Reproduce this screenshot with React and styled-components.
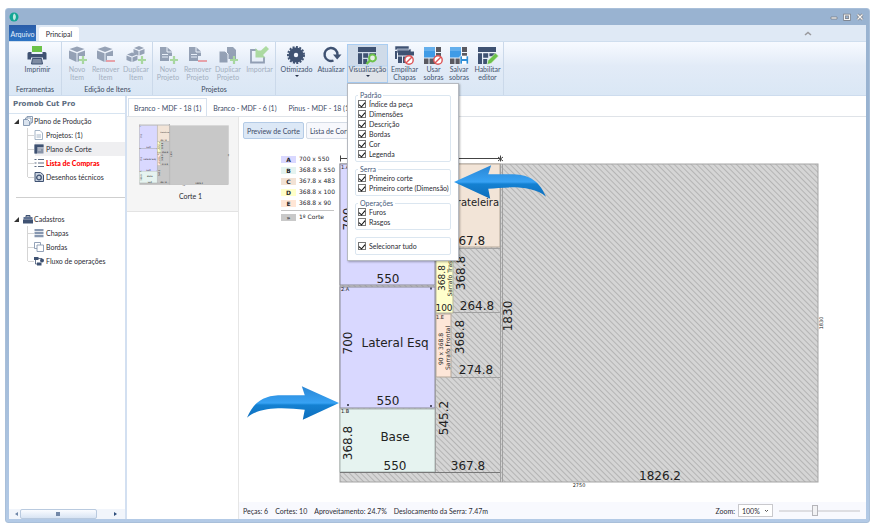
import { useId, useState } from 'react';
import styled, { createGlobalStyle, css } from 'styled-components';

const ribbonGroups = [
  {
    title: 'Ferramentas',
    items: [{ icon: 'printer', label: 'Imprimir', width: 47 }],
  },
  {
    title: 'Edição de Itens',
    items: [
      { icon: 'boxAdd', label: 'Novo Item', width: 28, disabled: true },
      { icon: 'boxRemove', label: 'Remover Item', width: 29, disabled: true },
      { icon: 'boxCopy', label: 'Duplicar Item', width: 32, disabled: true },
    ],
  },
  {
    title: 'Projetos',
    items: [
      { icon: 'docAdd', label: 'Novo Projeto', width: 30, disabled: true },
      { icon: 'docRemove', label: 'Remover Projeto', width: 29, disabled: true },
      { icon: 'docCopy', label: 'Duplicar Projeto', width: 32, disabled: true },
      { icon: 'importIcon', label: 'Importar', width: 31, disabled: true },
    ],
  },
  {
    title: '',
    items: [
      { icon: 'saw', label: 'Otimizado', width: 37, arrow: true },
      { icon: 'refresh', label: 'Atualizar', width: 32 },
      { icon: 'layoutSearch', label: 'Visualização', width: 41, arrow: true, menu: true },
      { icon: 'stack', label: 'Empilhar Chapas', width: 33 },
      { icon: 'leftoverUse', label: 'Usar sobras', width: 25 },
      { icon: 'leftoverSave', label: 'Salvar sobras', width: 26 },
      { icon: 'layoutEdit', label: 'Habilitar editor', width: 31 },
    ],
  },
];

const menuGroups = [
  { title: 'Padrão', options: ['Índice da peça', 'Dimensões', 'Descrição', 'Bordas', 'Cor', 'Legenda'] },
  { title: 'Serra', options: ['Primeiro corte', 'Primeiro corte (Dimensão)'] },
  { title: 'Operações', options: ['Furos', 'Rasgos'] },
];

const legend = [
  { id: 'A', size: '700 x 550', color: '#d9d8ff' },
  { id: 'B', size: '368.8 x 550', color: '#e4f3f0' },
  { id: 'C', size: '367.8 x 483', color: '#f2e2d4' },
  { id: 'D', size: '368.8 x 100', color: '#ffffc8' },
  { id: 'E', size: '368.8 x 90', color: '#ffe6d6' },
];

const production = [
  { icon: 'pages', label: 'Projetos: (1)' },
  { icon: 'plan', label: 'Plano de Corte', selected: true },
  { icon: 'list', label: 'Lista de Compras', alert: true },
  { icon: 'technical', label: 'Desenhos técnicos' },
];

const records = [
  { icon: 'sheets', label: 'Chapas' },
  { icon: 'edges', label: 'Bordas' },
  { icon: 'flow', label: 'Fluxo de operações' },
];

const NAVY = '#3f5272';
const GREEN = '#6cc24a';

const Plus = () => <path d="M17 10v8M13 14h8" stroke={GREEN} strokeWidth="2.2" />;
const Minus = () => <path d="M12 15h9" stroke="#e8474c" strokeWidth="1.8" />;
const Forbidden = () => (
  <g fill="#fff" stroke="#dd5456" strokeWidth="1.4">
    <circle cx="16" cy="14" r="4.2" />
    <path d="M13 17l6-6" />
  </g>
);
const Box = () => (
  <g fill={NAVY}>
    <path d="M11 0.500l7.500 2.600-7.500 2.800-7.500-2.800z" />
    <path d="M3 4.500l7.500 2.800v8.600L3 12.500z" />
    <path d="M19 4.500l-7.500 2.800v8.600l1.500-0.600V10h6z" />
  </g>
);
const Doc = () => (
  <g>
    <path d="M3 1h7l5 4.600V10h-3v5H3z" fill={NAVY} />
    <path d="M10 1v5h5M5 8.500h6M5 11h6" stroke="#e6edf8" fill="none" />
  </g>
);
const Panels = () => (
  <path d="M2 1h18v5H2zM2 7.200h4v10.800H2zM7.200 7.200h5v4.600h-5zM7.200 13h4v5h-4zM13.400 7.200H20v3h-6.600z" fill={NAVY} />
);
const Leftover = () => (
  <g>
    <path d="M2 1h11v10.500H2z" fill="#3f9be6" />
    <path d="M2 1h11v4H2z" fill="#7dbcf0" opacity="0.6" />
    <path d="M14 1h5v5h-5zM14 7h5v6h-5zM2 12.600h4.500V18H2zM7.500 12.600H13V18H7.500z" fill="#5a5a62" />
  </g>
);

const icons = {
  printer: (
    <g>
      <path d="M6 0h10v6H6z" fill={GREEN} />
      <path d="M3 6h2.500v2h11V6H19a1.500 1.500 0 0 1 1.500 1.500v6H17V11.500H5v2H1.500v-6A1.500 1.500 0 0 1 3 6z" fill={NAVY} />
      <path d="M6.500 12.500h9l1 5.500h-11z" fill="#7d8ba2" stroke={NAVY} />
    </g>
  ),
  boxAdd: <><Box /><Plus /></>,
  boxRemove: <><Box /><Minus /></>,
  boxCopy: (
    <g>
      <path d="M14 0l5 2-5 2-5-2zM8.500 3l5 2v4.500l-5-2zM19.500 3l-5 2v4.500l5-2z" fill={NAVY} />
      <path d="M7 6.500l5 2-5 2-5-2zM1.500 9.500l5 2V16l-5-2zM12.500 9.500l-5 2V16l5-2z" fill={NAVY} />
      <Plus />
    </g>
  ),
  docAdd: <><Doc /><Plus /></>,
  docRemove: <><Doc /><Minus /></>,
  docCopy: (
    <g>
      <path d="M10 1h6l3 3v9h-9z" fill={NAVY} />
      <path d="M2 5h6l3 3v9H2z" fill={NAVY} stroke="#eef3fb" />
      <Plus />
    </g>
  ),
  importIcon: (
    <g>
      <path d="M9 4H3v12.500h13V11" stroke={NAVY} strokeWidth="1.800" fill="none" />
      <path d="M18 0l3 3-6 6 2.500 2.500H7.500V2L10 4.500l3 0z" fill={GREEN} />
    </g>
  ),
  saw: (
    <g>
      <circle cx="11" cy="9" r="7.500" fill={NAVY} />
      <circle cx="11" cy="9" r="8" fill="none" stroke={NAVY} strokeWidth="2" strokeDasharray="2 1.400" />
      <circle cx="11" cy="9" r="2.200" fill="#f2f6fd" />
    </g>
  ),
  refresh: (
    <g>
      <path d="M13.500 14.500A6.500 6.500 0 1 1 17.500 9" stroke={NAVY} strokeWidth="2.400" fill="none" />
      <path d="M13 8.500h8.500L17.200 13.500z" fill={NAVY} />
    </g>
  ),
  layoutSearch: (
    <g>
      <Panels />
      <circle cx="16.500" cy="12" r="3.400" fill="#e6efe6" stroke={GREEN} strokeWidth="2" />
      <path d="M14 14.500L10.500 18" stroke={GREEN} strokeWidth="2.400" />
    </g>
  ),
  stack: (
    <g>
      <path d="M2 0h14v4H2zM4 3h14v4H4z" fill={NAVY} stroke="#dfe8f5" strokeWidth="0.600" />
      <path d="M5 5.500h16v4H5zM5 10.500h4V17H5zM10 10.500h4V17h-4zM2 5h2v8H2z" fill={NAVY} />
      <Forbidden />
    </g>
  ),
  leftoverUse: <><Leftover /><Forbidden /></>,
  leftoverSave: (
    <g>
      <Leftover />
      <path d="M12 10h8.500v8H12z" fill="#2f8fd8" stroke="#fff" strokeWidth="0.600" />
      <path d="M14 10h4.500v3H14zM14 15h4.500v3H14z" fill="#fff" />
    </g>
  ),
  layoutEdit: (
    <g>
      <Panels />
      <path d="M11 18.500l1-4 7.500-7.500 3 3-7.500 7.500z" fill={GREEN} stroke="#eef5ee" strokeWidth="0.600" />
    </g>
  ),
};

const treeIcons = {
  production: (
    <g fill="#fff" stroke="#7f93ad" strokeWidth="0.900">
      <path d="M4 0.500h5.500v6H4z" />
      <path d="M2.500 2H8v6H2.500z" />
      <path d="M0.500 3.500h4l2 2v4h-6z" fill="#dbe4ef" />
    </g>
  ),
  pages: (
    <g stroke="#9aabbf" strokeWidth="0.900" fill="#fff">
      <path d="M1 0.500h5l2.500 2.500v6.500H1z" />
      <path d="M2.500 5h4.500M2.500 7h4.500" />
    </g>
  ),
  plan: (
    <g>
      <path d="M0.500 0.500h9v9h-9z" fill="#8793a8" />
      <path d="M0.500 0.500h9V3h-9zM0.500 3H3v6.500H0.500z" fill={NAVY} />
      <path d="M4 4h5M4 6h3" stroke="#e3e7ee" strokeWidth="0.700" />
    </g>
  ),
  list: (
    <path d="M0.500 1.500h2M0.500 5h2M0.500 8.500h2M4 1.500h6M4 5h6M4 8.500h6" stroke="#5c6b82" strokeWidth="1.100" />
  ),
  technical: (
    <g>
      <path d="M1 0.500h5.500L9.500 3v6.500H1z" fill="#c9d2df" stroke={NAVY} />
      <circle cx="5" cy="5.500" r="2.300" fill="none" stroke={NAVY} strokeWidth="1.300" />
    </g>
  ),
  cabinet: (
    <g>
      <path d="M3 1.500h4V3H3z" fill="none" stroke={NAVY} />
      <path d="M0.500 3h9v2.500h-9z" fill="#5f7192" />
      <path d="M0 5.500h10v4H0z" fill={NAVY} />
    </g>
  ),
  sheets: <path d="M0.500 1h9v2.200h-9zM0.500 4h9v2.200h-9zM0.500 7h9v2.200h-9z" fill="#8797b0" />,
  edges: (
    <g fill="#fff" stroke="#8797b0" strokeWidth="0.900">
      <path d="M0.500 0.500h6v6h-6z" />
      <path d="M3 3h6.500v6.500H3z" />
    </g>
  ),
  flow: (
    <g fill={NAVY}>
      <path d="M0 1h4.500v3H0zM3 6.500h4.500v3H3z" />
      <circle cx="8" cy="4.500" r="2" />
      <path d="M4 2.500h4M1.500 4v4H3" stroke={NAVY} fill="none" strokeWidth="0.800" />
    </g>
  ),
};

function Board({ flat }) {
  const hatch = useId();
  const waste = flat ? '#c8c8c8' : `url(#${hatch})`;

  return (
    <Drawing viewBox="337 155 489 335">
      <defs>
        <pattern id={hatch} width="4" height="4" patternUnits="userSpaceOnUse" patternTransform="rotate(-45)">
          <rect width="4" height="4" fill="#d5d5d5" />
          <rect width="1" height="4" fill="#b4b4b4" />
        </pattern>
      </defs>

      <rect x="340" y="164" width="478" height="318" fill={waste} stroke="#a5a5a5" />

      <g stroke="#444" fill="none">
        <path d="M340 158.500H500" />
        <path d="M340.500 155.500v6M500.500 155.500v6M498 157l5 4M498 161l5-4" />
      </g>

      <g stroke="#8a8a96">
        <rect x="340" y="164" width="95" height="121" fill="#d9d8ff" />
        <rect x="340" y="287" width="95" height="121" fill="#d9d8ff" />
        <rect x="340" y="409" width="95" height="63" fill="#e6f3f0" stroke="#a9b5b2" />
        <rect x="436" y="164" width="64" height="83" fill="#f2e4d7" stroke="#b5a899" />
        <rect x="436" y="249" width="17" height="64" fill="#ffffcc" stroke="#b5b59a" />
        <rect x="436" y="314" width="15" height="63" fill="#fde6d8" stroke="#b5a899" />
      </g>

      <g stroke="#a0a0a0" fill="none">
        <path d="M435.500 164V472M500.500 164V482M502.500 164V482" />
        <path d="M453 312.500H500M451 377.500H500M436 248.500H500" />
        <path d="M340 472.500H500" stroke="#777" />
      </g>

      <BoardText>
        <text x="388" y="283">550</text>
        <text x="395" y="347">Lateral Esq</text>
        <text x="388" y="405">550</text>
        <text x="395" y="441">Base</text>
        <text x="395" y="470">550</text>
        <text x="468" y="470">367.8</text>
        <text x="468" y="245">367.8</text>
        <text x="477" y="310">264.8</text>
        <text x="476" y="374">274.8</text>
        <text x="660" y="480">1826.2</text>
        <text transform="translate(352 219) rotate(-90)">700</text>
        <text transform="translate(352 343) rotate(-90)">700</text>
        <text transform="translate(352 443) rotate(-90)">368.8</text>
        <text transform="translate(465 273) rotate(-90)">368.8</text>
        <text transform="translate(464 337) rotate(-90)">368.8</text>
        <text transform="translate(448 418) rotate(-90)">545.2</text>
        <text transform="translate(512 316) rotate(-90)">1830</text>
      </BoardText>
      <BoardText $size={10}>
        <text x="475" y="206">Prateleira</text>
      </BoardText>
      <BoardText $size={9}>
        <text x="444" y="311">100</text>
        <text transform="translate(445 278) rotate(-90)">368.8</text>
      </BoardText>
      <BoardText $size={6}>
        <text transform="translate(443 349) rotate(-90)">90 x 368.8</text>
        <text transform="translate(450 348) rotate(-90)">Sarrafo Frontal</text>
        <text transform="translate(452 273) rotate(-90)">Sarrafo Traseiro</text>
      </BoardText>
      <BoardText $size={5}>
        <text x="345" y="169">1.A</text>
        <text x="345" y="291">2.A</text>
        <text x="345" y="413">1.B</text>
        <text x="440" y="319">1.E</text>
        <text x="579" y="487">2750</text>
        <text transform="translate(823 323) rotate(-90)">1830</text>
      </BoardText>
      <path d="M430 288.500h2M347 405h2M430 406h2" stroke="#55556a" strokeWidth="2" />
    </Drawing>
  );
}

function PointerArrow({ id, flip }) {
  return (
    <svg viewBox="0 0 94 34" width="92" height="34">
      <defs>
        <linearGradient id={id} x1="0" y1="0" x2="0" y2="1">
          <stop offset="0" stopColor="#2a86d4" />
          <stop offset="0.500" stopColor="#37a2f4" />
          <stop offset="0.560" stopColor="#1481d2" />
          <stop offset="1" stopColor="#0d6dbb" />
        </linearGradient>
      </defs>
      <g transform={flip ? 'translate(94 0) scale(-1 1)' : undefined}>
        <path d="M0 32C8 13 20 9 36 9H59L56 0 94 17 57 34 59 24C40 22 14 20 0 32Z" fill={`url(#${id})`} />
      </g>
    </svg>
  );
}

function Option({ label }) {
  return (
    <OptionLabel>
      <input type="checkbox" defaultChecked />
      {label}
    </OptionLabel>
  );
}

function ViewMenu() {
  return (
    <Menu>
      {menuGroups.map(group => (
        <OptionGroup key={group.title}>
          <legend>{group.title}</legend>
          {group.options.map(option => <Option key={option} label={option} />)}
        </OptionGroup>
      ))}
      <SelectAll>
        <Option label="Selecionar tudo" />
      </SelectAll>
    </Menu>
  );
}

function RibbonItem({ item, open, onToggle }) {
  return (
    <RibbonSlot $width={item.width}>
      <RibbonButton type="button" disabled={item.disabled} $open={open} onClick={onToggle}>
        <svg viewBox="0 0 23 19" width="23" height="19">{icons[item.icon]}</svg>
        <span>{item.label}</span>
        {item.arrow && <Caret />}
      </RibbonButton>
      {open && <ViewMenu />}
    </RibbonSlot>
  );
}

function Tree({ icon, title, items }) {
  return (
    <section>
      <TreeRoot>
        <Expander />
        <svg viewBox="0 0 10 10" width="10" height="10">{treeIcons[icon]}</svg>
        {title}
      </TreeRoot>
      <TreeList>
        {items.map(item => (
          <TreeItem key={item.label} $selected={item.selected} $alert={item.alert}>
            <svg viewBox="0 0 10 10" width="10" height="10">{treeIcons[item.icon]}</svg>
            <span>{item.label}</span>
          </TreeItem>
        ))}
      </TreeList>
    </section>
  );
}

export default function App() {
  const [menuOpen, setMenuOpen] = useState(true);

  return (
    <>
      <GlobalStyle />
      <Window>
        <TitleBar>
          <svg viewBox="0 0 10 10" width="10" height="10">
            <circle cx="5" cy="5" r="4.500" fill="#12a594" />
            <path d="M5 1.500c2.500 1 2.500 5.500 0 7C3.500 6.500 3.500 3.500 5 1.500z" fill="#bfe9e0" />
          </svg>
          <WindowButtons>
            <button type="button" aria-label="Minimizar">
              <svg viewBox="0 0 8 8" width="8" height="8"><path d="M1 4h6v2H1z" fill="#f4f4f4" stroke="#77797f" strokeWidth="0.700" /></svg>
            </button>
            <button type="button" aria-label="Maximizar">
              <svg viewBox="0 0 8 8" width="8" height="8"><path d="M1.500 2h5v4.500h-5z" fill="none" stroke="#77797f" strokeWidth="2.400" /><path d="M1.500 2h5v4.500h-5z" fill="none" stroke="#f4f4f4" strokeWidth="1.200" /></svg>
            </button>
            <button type="button" aria-label="Fechar">
              <svg viewBox="0 0 8 8" width="8" height="8"><path d="M1.500 1.500l5 5M6.500 1.500l-5 5" stroke="#77797f" strokeWidth="2.600" /><path d="M1.500 1.500l5 5M6.500 1.500l-5 5" stroke="#f4f4f4" strokeWidth="1.400" /></svg>
            </button>
          </WindowButtons>
        </TitleBar>

        <Frame>
          <RibbonTabs>
            <FileTab type="button">Arquivo</FileTab>
            <RibbonTab type="button">Principal</RibbonTab>
            <Collapse type="button" aria-label="Recolher">
              <svg viewBox="0 0 8 5" width="8" height="5"><path d="M1 4l3-2.500L7 4" fill="none" stroke="#9a9a9e" strokeWidth="1.600" /></svg>
            </Collapse>
          </RibbonTabs>

          <Ribbon>
            {ribbonGroups.map(group => (
              <RibbonGroup key={group.title}>
                <RibbonItems>
                  {group.items.map(item => (
                    <RibbonItem
                      key={item.label}
                      item={item}
                      open={item.menu && menuOpen}
                      onToggle={item.menu ? () => setMenuOpen(!menuOpen) : undefined}
                    />
                  ))}
                </RibbonItems>
                <GroupTitle>{group.title}</GroupTitle>
              </RibbonGroup>
            ))}
          </Ribbon>

          <Body>
            <Sidebar>
              <SidebarTitle>Promob Cut Pro</SidebarTitle>
              <Trees>
                <Tree icon="production" title="Plano de Produção" items={production} />
                <TreeSeparator />
                <Tree icon="cabinet" title="Cadastros" items={records} />
              </Trees>
              <ScrollBar>
                <ScrollArrow />
                <ScrollThumb />
                <ScrollArrow $right />
              </ScrollBar>
            </Sidebar>

            <Content>
              <MaterialTabs>
                <MaterialTab type="button" $active>Branco - MDF - 18 (1)</MaterialTab>
                <MaterialTab type="button">Branco - MDF - 6 (1)</MaterialTab>
                <MaterialTab type="button">Pinus - MDF - 18 (1)</MaterialTab>
              </MaterialTabs>

              <Workspace>
                <Cuts>
                  <Cut>
                    <Board flat />
                    <figcaption>Corte 1</figcaption>
                  </Cut>
                </Cuts>

                <Preview>
                  <PreviewTabs>
                    <PreviewTab type="button" $active>Preview de Corte</PreviewTab>
                    <PreviewTab type="button">Lista de Corte</PreviewTab>
                  </PreviewTabs>

                  <Plan>
                    <Legend>
                      {legend.map(part => (
                        <li key={part.id}>
                          <Swatch $color={part.color}>{part.id}</Swatch>
                          {part.size}
                        </li>
                      ))}
                      <FirstCut>
                        <Swatch $color="#c9c9c9">»</Swatch>
                        1º Corte
                      </FirstCut>
                    </Legend>
                    <Board />
                  </Plan>

                  <StatusBar>
                    <span>Peças: 6</span>
                    <span>Cortes: 10</span>
                    <span>Aproveitamento: 24.7%</span>
                    <span>Deslocamento da Serra: 7.47m</span>
                    <ZoomBox>
                      <label htmlFor="zoom">Zoom:</label>
                      <ZoomSelect id="zoom" defaultValue="100%">
                        <option>50%</option>
                        <option>100%</option>
                        <option>200%</option>
                      </ZoomSelect>
                      <ZoomSlider type="range" aria-label="Zoom" min="0" max="100" defaultValue="44" />
                    </ZoomBox>
                  </StatusBar>
                </Preview>
              </Workspace>
            </Content>
          </Body>
        </Frame>

        <ArrowRight><PointerArrow id="arrow-right" /></ArrowRight>
        <ArrowLeft><PointerArrow id="arrow-left" flip /></ArrowLeft>
      </Window>
    </>
  );
}

const GlobalStyle = createGlobalStyle`
  * {
    box-sizing: border-box;
  }

  body {
    margin: 0;
    background: #fff;
    color: #2b2b33;
    font-family: Lato, 'Open Sans', sans-serif;
    font-size: 7px;
    line-height: 8px;
  }

  button, input, select {
    font: inherit;
    color: inherit;
  }

  ul {
    margin: 0;
    padding: 0;
    list-style: none;
  }

  svg {
    display: block;
    flex-shrink: 0;
  }
`

const Window = styled.div`
  position: relative;
  display: flex;
  flex-direction: column;
  min-height: calc(100vh - 13px);
  margin: 8px 6px 5px 5px;
  padding: 0 3px 3px;
  border: 1px solid #a9bfd9;
  border-radius: 3px;
  background: linear-gradient(#99b3d1 50%, #b3cae6);
`

const TitleBar = styled.header`
  display: flex;
  align-items: center;
  justify-content: space-between;
  height: 16px;
  padding-right: 2px;
`

const WindowButtons = styled.div`
  display: flex;
  gap: 5px;

  button {
    padding: 0;
    border: none;
    background: none;
  }
`

const Frame = styled.div`
  flex: 1;
  display: flex;
  flex-direction: column;
  background: #fff;
`

const RibbonTabs = styled.nav`
  display: flex;
  height: 17px;
  background: #dfe9f5;
  border-bottom: 1px solid #cfdeee;
`

const FileTab = styled.button`
  width: 27px;
  padding: 1px 0 0;
  border: none;
  background: linear-gradient(#2a5ca8, #2d74c4);
  color: #e6f0fc;
`

const RibbonTab = styled.button`
  width: 40px;
  margin: 2px 0 0 3px;
  padding: 0;
  border: none;
  border-radius: 2px 2px 0 0;
  background: #fff;
`

const Collapse = styled.button`
  align-self: center;
  margin: 0 54px 0 auto;
  padding: 0;
  border: none;
  background: none;
`

const Ribbon = styled.div`
  display: flex;
  height: 54px;
  background: linear-gradient(#f7faff, #e2ebf7 45%, #dae7f5);
  border-bottom: 1px solid #cddcee;
`

const RibbonItems = styled.div`
  flex: 1;
  display: flex;
`

const RibbonGroup = styled.section`
  display: flex;
  flex-direction: column;
  padding: 2px 0;
  border-right: 1px solid #cbd9ea;

  &:first-child ${RibbonItems} {
    padding-left: 5px;
  }

  &:nth-child(2) {
    padding-left: 1px;
  }

  &:last-child {
    padding-left: 2px;
  }
`

const RibbonSlot = styled.div`
  position: relative;
  width: ${({ $width }) => $width}px;
`

const RibbonButton = styled.button`
  display: flex;
  flex-direction: column;
  align-items: center;
  width: 100%;
  height: 39px;
  padding: 1px 0 0;
  border: 1px solid transparent;
  background: none;
  color: #44546e;

  ${({ $open }) => $open && css`
    border-color: #a9cdf2;
    background: linear-gradient(#cfdbe9 55%, #b3d3f3 56%, #dfe3e9 60%);
  `}

  &:disabled svg {
    opacity: 0.5;
  }

  &:disabled {
    color: #a3afc0;
  }
`

const Caret = styled.i`
  margin-top: 2px;
  border: 2px solid transparent;
  border-top-color: #26324a;
`

const GroupTitle = styled.h2`
  margin: 0;
  height: 8px;
  font-size: 7px;
  font-weight: 400;
  text-align: center;
  color: #3c4a60;
`

const Menu = styled.div`
  position: absolute;
  z-index: 2;
  top: 39px;
  left: 0;
  display: flex;
  flex-direction: column;
  gap: 3px;
  width: 112px;
  padding: 7px 7px 5px;
  border: 1px solid #b5b9c0;
  background: #fff;
  box-shadow: 1px 1px 2px rgba(0, 0, 0, 0.3);
`

const OptionGroup = styled.fieldset`
  min-width: 0;
  margin: 0;
  padding: 0 0 2px 2px;
  border: 1px solid #dbe6f0;
  border-radius: 2px;

  legend {
    padding: 0 2px;
    color: #46597a;
  }
`

const SelectAll = styled.div`
  margin-top: 4px;
  padding: 3px 0 3px 2px;
  border: 1px solid #dbe6f0;
  border-radius: 2px;
`

const OptionLabel = styled.label`
  display: flex;
  align-items: center;
  gap: 3px;
  height: 10px;
  white-space: nowrap;

  input {
    appearance: none;
    display: grid;
    flex-shrink: 0;
    place-content: center;
    width: 8px;
    height: 8px;
    margin: 0;
    border: 1px solid #777;
    background: #fff;
  }

  input:checked::after {
    content: '';
    width: 3px;
    height: 5px;
    border: solid #111;
    border-width: 0 1px 1px 0;
    transform: rotate(40deg);
  }
`

const Body = styled.div`
  flex: 1;
  display: flex;
`

const Sidebar = styled.aside`
  display: flex;
  flex-direction: column;
  width: 118px;
  border-right: 2px solid #d3e0f1;
`

const SidebarTitle = styled.h1`
  margin: 0;
  padding: 4px 4px 5px;
  border-bottom: 1px solid #d7e4f1;
  font-family: 'DejaVu Sans', sans-serif;
  font-size: 7px;
  font-weight: 700;
  line-height: 8px;
  color: #5b6b80;
`

const Trees = styled.div`
  flex: 1;
`

const TreeRoot = styled.div`
  display: flex;
  align-items: center;
  gap: 1px;
  height: 14px;
  padding-left: 5px;

  svg {
    margin-left: 3px;
  }
`

const Expander = styled.i`
  border: solid transparent;
  border-width: 0 0 5px 5px;
  border-bottom-color: #333;
`

const TreeList = styled.ul`
  padding-left: 18px;
`

const TreeItem = styled.li`
  display: flex;
  align-items: center;
  height: 14px;
  border-left: 1px solid #d5d5d5;

  &::before {
    content: '';
    width: 6px;
    border-top: 1px solid #d5d5d5;
  }

  &:last-child {
    border-image: linear-gradient(#d5d5d5 50%, transparent 50%) 1;
  }

  span {
    flex: 1;
    padding-left: 2px;
    line-height: 14px;
    white-space: nowrap;
  }

  ${({ $selected }) => $selected && css`
    background: linear-gradient(90deg, transparent 7px, #efeff1 7px);
  `}

  ${({ $alert }) => $alert && css`
    color: #f00;
    font-weight: 900;
  `}
`

const TreeSeparator = styled.hr`
  margin: 13px 0 14px 7px;
  border: none;
  border-top: 1px solid #cfcfcf;
`

const ScrollBar = styled.div`
  display: flex;
  align-items: center;
  justify-content: space-between;
  height: 10px;
  padding: 0 5px 0 3px;
  background: #f1f5fb;
`

const ScrollArrow = styled.i`
  border: 2px solid transparent;
  border-width: 2px 3px;
  border-right-color: ${({ $right }) => ($right ? 'transparent' : '#6f87a8')};
  border-left-color: ${({ $right }) => ($right ? '#2f4f7d' : 'transparent')};
`

const ScrollThumb = styled.div`
  display: grid;
  place-content: center;
  width: 77px;
  height: 10px;
  margin-right: 16px;
  border: 1px solid #b9cadf;
  border-radius: 2px;
  background: linear-gradient(#fafcff, #d8e4f3);

  &::after {
    content: '';
    width: 4px;
    height: 4px;
    background: #7388a8;
  }
`

const Content = styled.main`
  flex: 1;
  display: flex;
  flex-direction: column;
  min-width: 0;
`

const MaterialTabs = styled.nav`
  display: flex;
  height: 21px;
  padding: 2px 0 0 1px;
  border-bottom: 1px solid #dfe3e8;
`

const MaterialTab = styled.button`
  height: 18px;
  padding: 0 5px;
  border: 1px solid transparent;
  border-bottom: none;
  background: none;
  color: #3c4a66;

  ${({ $active }) => $active && css`
    border-color: #d6e1ee;
  `}
`

const Workspace = styled.div`
  flex: 1;
  display: flex;
`

const Cuts = styled.div`
  width: 112px;
  border-right: 1px solid #e6e6e6;
`

const Cut = styled.figure`
  display: flex;
  flex-direction: column;
  gap: 6px;
  margin: 0;
  padding: 7px 8px 11px 12px;
  border-bottom: 1px solid #e3e3e3;
  background: #f5f5f5;
  text-align: center;

  figcaption {
    padding-left: 12px;
  }
`

const Preview = styled.section`
  flex: 1;
  display: flex;
  flex-direction: column;
  min-width: 0;
`

const PreviewTabs = styled.div`
  display: flex;
  gap: 2px;
  padding: 5px 4px;
`

const PreviewTab = styled.button`
  height: 17px;
  padding: 0 3px;
  border: 1px solid #d5dce6;
  border-radius: 2px;
  background: #f7f8fc;
  color: #3c4a66;

  ${({ $active }) => $active && css`
    border-color: #b4cbe6;
    background: #dce8f6;
  `}
`

const Plan = styled.div`
  flex: 1;
  display: flex;
  align-items: flex-start;
  gap: 3px;
  padding: 11px 40px 8px 42px;
`

const Legend = styled.ul`
  width: 53px;
  font-family: 'DejaVu Sans', sans-serif;
  font-size: 6px;
  color: #26262c;
  white-space: nowrap;

  li {
    display: flex;
    align-items: center;
    gap: 3px;
    padding-bottom: 3px;
    line-height: 8px;
  }
`

const Swatch = styled.b`
  flex-shrink: 0;
  width: 15px;
  text-align: center;
  line-height: 7px;
  background: ${({ $color }) => $color};
`

const FirstCut = styled.li`
  padding-top: 2px;
  border-top: 1px solid #c4c4c4;
`

const Drawing = styled.svg`
  flex: 1;
  min-width: 0;
  width: 100%;
`

const BoardText = styled.g`
  fill: #222;
  font-family: 'DejaVu Sans', sans-serif;
  font-size: ${({ $size = 12 }) => $size}px;
  text-anchor: middle;
`

const StatusBar = styled.footer`
  display: flex;
  align-items: center;
  gap: 7px;
  height: 17px;
  padding: 0 6px 0 4px;
  background: #f8f9fe;
  white-space: nowrap;
`

const ZoomBox = styled.div`
  display: flex;
  align-items: center;
  gap: 3px;
  margin-left: auto;
`

const ZoomSelect = styled.select`
  appearance: none;
  width: 35px;
  height: 13px;
  margin-right: 3px;
  padding: 0 3px;
  border: 1px solid #c9c9cd;
  background: #fff url("data:image/svg+xml,%3Csvg xmlns='http://www.w3.org/2000/svg' width='5' height='4'%3E%3Cpath d='M1 1l1.500 1.500L4 1' fill='none' stroke='%23555'/%3E%3C/svg%3E") no-repeat right 3px center;
`

const ZoomSlider = styled.input`
  appearance: none;
  width: 81px;
  height: 12px;
  margin: 0;
  background: none;

  &::-webkit-slider-runnable-track {
    height: 2px;
    background: #dedee2;
  }

  &::-webkit-slider-thumb {
    appearance: none;
    width: 6px;
    height: 11px;
    margin-top: -5px;
    border: 1px solid #b5b5ba;
    background: #f2f2f4;
  }
`

const ArrowRight = styled.div`
  position: absolute;
  z-index: 3;
  top: 377px;
  left: 241px;
`

const ArrowLeft = styled.div`
  position: absolute;
  z-index: 3;
  top: 156px;
  left: 448px;
`
